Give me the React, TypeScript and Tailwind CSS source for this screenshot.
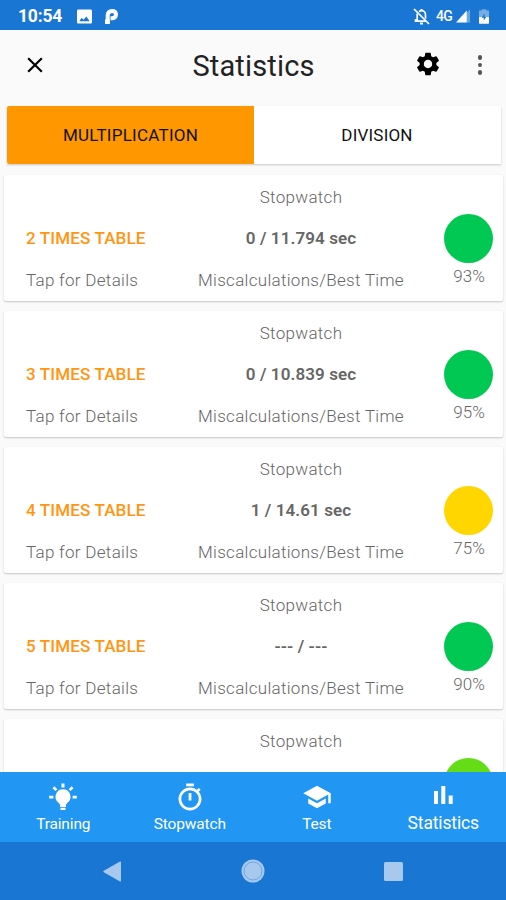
import React from "react";
import { MdSettings, MdClose, MdSchool } from "react-icons/md";

type Row = { n: number; time: string; pct: string; dot: string };

const rows: Row[] = [
  { n: 2, time: "0 / 11.794 sec", pct: "93%", dot: "bg-[#00c853]" },
  { n: 3, time: "0 / 10.839 sec", pct: "95%", dot: "bg-[#00c853]" },
  { n: 4, time: "1 / 14.61 sec", pct: "75%", dot: "bg-[#ffd600]" },
  { n: 5, time: "--- / ---", pct: "90%", dot: "bg-[#00c853]" },
];

function StatusBar() {
  return (
    <div className="flex h-[30px] shrink-0 items-center bg-[#1976d2] pl-[18px] pr-[16px] pt-[2px] text-white">
      <span className="w-[59px] text-[17.5px] font-bold leading-[20px] tracking-[-0.2px]">10:54</span>
      <svg className="h-[15px] w-[15px]" viewBox="0 0 16 15">
        <path
          fill="currentColor"
          fillRule="evenodd"
          d="M1.500 0h13c.8 0 1.500.7 1.500 1.500v12c0 .8-.7 1.500-1.500 1.500h-13C.7 15 0 14.300 0 13.500v-12C0 .7.700 0 1.500 0ZM2.500 12.500h11L10 7.500 7 11 5 8.800Z"
        />
      </svg>
      <svg className="ml-[13px] h-[15px] w-[13px]" viewBox="0 0 13 15" fill="none" stroke="currentColor">
        <path strokeWidth="4" d="M2.700 15V6.500C2.700 3.800 4.400 2 7 2s4 1.500 4 3.600-1.500 3.700-4 3.700H5.500" />
        <path strokeWidth="4.500" d="M0 12.700h4.700" />
      </svg>
      <div className="grow" />
      <svg className="h-[17px] w-[17px]" viewBox="0 0 17 17" fill="none" stroke="#fff" strokeWidth="1.700">
        <path d="M1 1 16 16" />
        <path d="M4.200 5.500V12H2.500v1.200h10.300M6 3.700c.7-.6 1.500-1 2.500-1 2.300 0 4 1.800 4 4v4" />
        <path d="M7 15.500h3M8.500 1v1.500" strokeWidth="2" />
      </svg>
      <span className="ml-[6px] w-[20px] text-[14px] font-medium leading-[18px] tracking-[-0.8px]">4G</span>
      <svg className="h-[14px] w-[14px]" viewBox="0 0 15 14">
        <path fill="#fff" fillOpacity=".35" d="M11 3.700 15 0v14h-4Z" />
        <path fill="#fff" d="M0 14 11.500 1v13Z" />
      </svg>
      <svg className="ml-[9px] mr-px h-[15px] w-[10px]" viewBox="0 0 11 16">
        <path fill="#fff" fillOpacity=".4" d="M3 0h5v1.500h3V9H0V1.500h3Z" />
        <path fill="#fff" d="M0 8.500h11v6.700c0 .5-.3.8-.8.8H.8c-.5 0-.8-.3-.8-.8Z" />
        <path fill="#1976d2" d="M6 4.500 3 9.500h2.200V12.500L8 8.500H6Z" />
      </svg>
    </div>
  );
}

function Header() {
  return (
    <header className="grid h-[75px] shrink-0 grid-cols-[70px_366px_70px] pt-[1px] text-black">
      <div className="flex h-[68px] items-center pl-[22px]">
        <MdClose className="size-[26px]" />
      </div>
      <div className="relative flex h-[68px] items-center justify-center">
        <h1 className="pl-[1px] pt-[2px] text-[29px] font-normal leading-[34px] tracking-[0.15px] text-[#222]">Statistics</h1>
        <MdSettings className="absolute right-[-6px] top-[19px] size-[28px]" />
      </div>
      <div className="flex h-[68px] flex-col items-center justify-center gap-[3px] pl-[18px]">
        <i className="size-[4.500px] rounded-full bg-[#555]" />
        <i className="size-[4.500px] rounded-full bg-[#555]" />
        <i className="size-[4.500px] rounded-full bg-[#555]" />
      </div>
    </header>
  );
}

const cardBase =
  "grid shrink-0 grid-cols-[175px_243px_81px] bg-white text-[17px] leading-[20px] text-[#666] shadow-[0_1px_2px_rgba(0,0,0,0.22)]";

function Card({ n, time, pct, dot }: Row) {
  return (
    <article className={`h-[126px] rounded-[2px] ${cardBase}`}>
      <div className="grid grid-rows-3 items-center pl-[22px] pt-[1px]">
        <span />
        <span className="whitespace-nowrap font-medium tracking-[0.15px] text-[#ff9510]">{n} TIMES TABLE</span>
        <span className="font-light tracking-[0.3px]">Tap for Details</span>
      </div>
      <div className="grid grid-rows-3 items-center justify-items-center whitespace-nowrap pl-px pt-[1px] font-light tracking-[0.3px]">
        <span>Stopwatch</span>
        <span className="font-semibold tracking-[0.1px]">{time}</span>
        <span>Miscalculations/Best Time</span>
      </div>
      <div className="flex flex-col items-center pl-[12px] pt-[38.500px]">
        <div className={`size-[49px] rounded-full ${dot}`} />
        <span className="mt-[3.500px] pl-px font-light">{pct}</span>
      </div>
    </article>
  );
}

/* The next card, of which only the top shows above the navigation bar. */
function PeekCard() {
  return (
    <article className={`h-[60px] rounded-t-[2px] ${cardBase}`}>
      <span />
      <span className="pl-px pt-[12px] text-center font-light tracking-[0.3px]">Stopwatch</span>
      <div className="flex justify-center pl-[12px] pt-[38.500px]">
        <div className="size-[49px] rounded-full bg-[#64dd17]" />
      </div>
    </article>
  );
}

function Bulb() {
  return (
    <svg className="h-[28px] w-[28px]" viewBox="0 0 28 28" fill="#fff">
      <path d="M14 6.200a7.500 7.500 0 0 0-4.200 13.700c.8.500 1.200 1.200 1.200 2v2h6v-2c0-.8.4-1.500 1.200-2A7.500 7.500 0 0 0 14 6.200ZM11.500 24.700h5V27h-5Z" />
      <path d="M12.500.5h3v4h-3ZM.2 12.800h4.200v2.700H.2ZM23.600 12.800h4.200v2.700h-4.200ZM5.400 3.300 8.300 6.200 6.400 8.100 3.500 5.200ZM22.600 3.300l1.900 1.900-2.900 2.900-1.900-1.900Z" />
    </svg>
  );
}

function Timer() {
  return (
    <svg className="h-[28px] w-[28px]" viewBox="0 0 28 28" fill="none" stroke="#fff">
      <circle cx="14" cy="16" r="10.100" strokeWidth="2.700" />
      <path d="M10.200 1.900h7.600" strokeWidth="2.800" />
      <path d="M14 10v7.500" strokeWidth="2.800" />
      <path d="m21 8.600 2.700-2.700" strokeWidth="2.600" />
    </svg>
  );
}

function Bars() {
  return (
    <svg className="h-[18px] w-[19px]" viewBox="0 0 19 18" fill="#fff">
      <path d="M0 5h4v13H0ZM7.300 0h4v18h-4ZM14.700 9.500h4V18h-4Z" />
    </svg>
  );
}

export default function App() {
  return (
    <div className="flex h-[900px] w-[506px] flex-col overflow-hidden bg-[#fafafa] font-[Roboto,sans-serif]">
      <StatusBar />
      <Header />
      <div className="ml-[7px] mr-[5px] mt-[0.500px] grid h-[58.500px] shrink-0 grid-cols-2 text-[17px] text-[#111] shadow-[0_1px_2px_rgba(0,0,0,0.2)]">
        <button className="rounded-l-[2px] bg-[#ff9800] pt-[2px] tracking-[0.25px]">MULTIPLICATION</button>
        <button className="bg-white pr-[1px] pt-[2px] tracking-[0.2px]">DIVISION</button>
      </div>
      <main className="flex h-[608px] shrink-0 flex-col gap-[10px] overflow-hidden pl-[4px] pr-[3px] pt-[11px]">
        {rows.map((r) => (
          <Card key={r.n} {...r} />
        ))}
        <PeekCard />
      </main>
      <nav className="grid h-[70px] shrink-0 grid-cols-4 bg-[#2196f3] text-center text-[15.500px] leading-[20px] tracking-[-0.15px] text-white">
        <div className="flex flex-col items-center pt-[11px]">
          <Bulb />
          <span className="mt-[3px]">Training</span>
        </div>
        <div className="flex flex-col items-center pt-[11px]">
          <Timer />
          <span className="mt-[3px]">Stopwatch</span>
        </div>
        <div className="flex flex-col items-center pl-px pt-[10px]">
          <MdSchool className="size-[30px]" />
          <span className="mt-[2px]">Test</span>
        </div>
        <div className="flex flex-col items-center pl-px pt-[14px]">
          <Bars />
          <span className="mt-[9px] text-[17.500px]">Statistics</span>
        </div>
      </nav>
      <div className="grid h-[58px] shrink-0 grid-cols-[113px_140px_140px_113px] bg-[#1976d2]">
        <div className="flex items-center justify-end">
          <svg className="mr-[-9px] h-[21px] w-[19px]" viewBox="0 0 19 21" fill="#a8c9ee">
            <path d="M.8 9.700 17 .5c.5-.3 1 0 1 .5v19c0 .5-.5.8-1 .5L.8 11.300c-.6-.4-.6-1.200 0-1.600Z" />
          </svg>
        </div>
        <div className="flex items-center justify-end">
          <svg className="mr-[-12px] size-[24px]" viewBox="0 0 24 24">
            <circle cx="12" cy="12" r="11.500" fill="#a8c9ee" />
            <circle cx="12" cy="12" r="9" fill="none" stroke="#6ea5e2" strokeWidth="1" />
          </svg>
        </div>
        <div className="flex items-center justify-end">
          <div className="mr-[-9.500px] size-[19px] rounded-[1.500px] bg-[#a8c9ee]" />
        </div>
      </div>
    </div>
  );
}
